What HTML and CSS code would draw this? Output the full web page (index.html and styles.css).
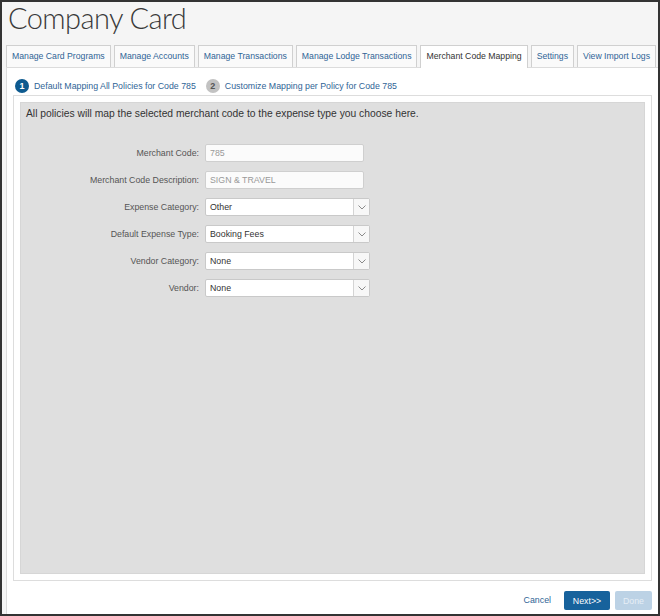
FILE: index.html
```html
<!DOCTYPE html>
<html>
<head>
<meta charset="utf-8">
<link rel="stylesheet" href="styles.css">
</head>
<body>
<div class="frame">
  <h1 class="title">Company Card</h1>
  <div class="tabs">
    <div class="tab">Manage Card Programs</div>
    <div class="tab">Manage Accounts</div>
    <div class="tab">Manage Transactions</div>
    <div class="tab">Manage Lodge Transactions</div>
    <div class="tab active">Merchant Code Mapping</div>
    <div class="tab">Settings</div>
    <div class="tab">View Import Logs</div>
  </div>
  <div class="panel">
    <div class="steps">
      <div class="step"><span class="num num-on">1</span><span class="step-text">Default Mapping All Policies for Code 785</span></div>
      <div class="step"><span class="num num-off">2</span><span class="step-text">Customize Mapping per Policy for Code 785</span></div>
    </div>
    <div class="box">
      <div class="well">
        <p class="intro">All policies will map the selected merchant code to the expense type you choose here.</p>
        <div class="form">
          <div class="label">Merchant Code:</div>
          <div class="input disabled">785</div>
          <div class="label">Merchant Code Description:</div>
          <div class="input disabled">SIGN &amp; TRAVEL</div>
          <div class="label">Expense Category:</div>
          <div class="select"><span class="sel-text">Other</span><span class="sel-btn"><svg width="8" height="5" viewBox="0 0 8 5"><path d="M0.5 0.5 L4 4 L7.5 0.5" fill="none" stroke="#8a8a8a" stroke-width="1"/></svg></span></div>
          <div class="label">Default Expense Type:</div>
          <div class="select"><span class="sel-text">Booking Fees</span><span class="sel-btn"><svg width="8" height="5" viewBox="0 0 8 5"><path d="M0.5 0.5 L4 4 L7.5 0.5" fill="none" stroke="#8a8a8a" stroke-width="1"/></svg></span></div>
          <div class="label">Vendor Category:</div>
          <div class="select"><span class="sel-text">None</span><span class="sel-btn"><svg width="8" height="5" viewBox="0 0 8 5"><path d="M0.5 0.5 L4 4 L7.5 0.5" fill="none" stroke="#8a8a8a" stroke-width="1"/></svg></span></div>
          <div class="label">Vendor:</div>
          <div class="select"><span class="sel-text">None</span><span class="sel-btn"><svg width="8" height="5" viewBox="0 0 8 5"><path d="M0.5 0.5 L4 4 L7.5 0.5" fill="none" stroke="#8a8a8a" stroke-width="1"/></svg></span></div>
        </div>
      </div>
    </div>
    <div class="footer">
      <a class="cancel">Cancel</a>
      <button class="btn btn-primary">Next&gt;&gt;</button>
      <button class="btn btn-disabled">Done</button>
    </div>
  </div>
</div>
</body>
</html>
```
FILE: styles.css
```css
* { box-sizing: border-box; }
html, body { margin: 0; padding: 0; }
body {
  font-family: "Liberation Sans", Arial, sans-serif;
  width: 660px;
  height: 616px;
  overflow: hidden;
}
.frame {
  width: 660px;
  height: 616px;
  border: 2px solid #333;
  background: #f5f5f5;
  display: flex;
  flex-direction: column;
}
.title {
  margin: 0;
  padding-left: 6px;
  height: 43px;
  font-family: "Lato Light", Lato, "Open Sans", sans-serif;
  font-weight: 300;
  font-size: 29px;
  letter-spacing: -0.6px;
  line-height: 32px;
  color: #3a3a3a;
}
.tabs {
  display: flex;
  gap: 3px;
  margin-left: 4px;
  height: 22px;
  position: relative;
  z-index: 1;
}
.tab {
  height: 22px;
  padding: 0 5px;
  border: 1px solid #d0d0d0;
  border-bottom: none;
  background: #fafafa;
  font-size: 8.7px;
  line-height: 21px;
  color: #2f6496;
  white-space: nowrap;
}
.tab.active {
  background: #fff;
  color: #333;
  height: 23px;
}
.panel {
  flex: 1;
  margin-left: 4px;
  background: #fff;
  border-left: 1px solid #dcdcdc;
  border-top: 1px solid #dcdcdc;
  display: flex;
  flex-direction: column;
}
.steps {
  display: flex;
  gap: 10px;
  padding: 11px 8px 0 8px;
  height: 27px;
}
.step {
  display: flex;
  align-items: center;
  gap: 5px;
  height: 14px;
}
.num {
  width: 14px;
  height: 14px;
  border-radius: 50%;
  font-size: 9px;
  font-weight: bold;
  line-height: 14px;
  text-align: center;
}
.num-on { background: #0d5a8f; color: #fff; }
.num-off { background: #c2c2c2; color: #555; }
.step-text {
  font-size: 8.8px;
  color: #2f6496;
  white-space: nowrap;
}
.box {
  flex: 1;
  margin: 0 6px;
  border: 1px solid #dddddd;
  padding: 6px;
  display: flex;
}
.well {
  flex: 1;
  background: #dfdfdf;
  border: 1px solid #d6d6d6;
  padding: 4px 5px;
}
.intro {
  margin: 0;
  font-size: 10.3px;
  line-height: 14px;
  color: #333;
}
.form {
  display: grid;
  grid-template-columns: 173px auto;
  justify-content: start;
  column-gap: 6px;
  row-gap: 9px;
  margin-top: 23px;
  align-items: center;
}
.label {
  text-align: right;
  font-size: 8.8px;
  color: #555;
  white-space: nowrap;
}
.input {
  width: 159px;
  height: 18px;
  border: 1px solid #cfcfcf;
  border-radius: 2px;
  background: #fbfbfb;
  font-size: 8.8px;
  line-height: 16px;
  padding-left: 4px;
}
.input.disabled { color: #999; }
.select {
  width: 165px;
  height: 18px;
  border: 1px solid #c9c9c9;
  border-radius: 2px;
  background: #fff;
  display: flex;
}
.sel-text {
  flex: 1;
  font-size: 8.8px;
  line-height: 16px;
  padding-left: 4px;
  color: #333;
}
.sel-btn {
  width: 16px;
  border-left: 1px solid #d4d4d4;
  background: #f7f7f7;
  display: flex;
  align-items: center;
  justify-content: center;
}
.footer {
  height: 33px;
  padding: 10px 6px 0 0;
  display: flex;
  justify-content: flex-end;
  align-items: flex-start;
}
.cancel {
  font-size: 8.8px;
  color: #2f6496;
  line-height: 19px;
  margin-right: 13px;
}
.btn {
  height: 19px;
  border: none;
  border-radius: 2px;
  font-family: "Liberation Sans", Arial, sans-serif;
  font-size: 8.8px;
  padding: 0;
}
.btn-primary {
  width: 46px;
  background: #17629c;
  color: #fff;
  margin-right: 5px;
}
.btn-disabled {
  width: 37px;
  background: #bcd2e5;
  color: #e6eef6;
}
```
